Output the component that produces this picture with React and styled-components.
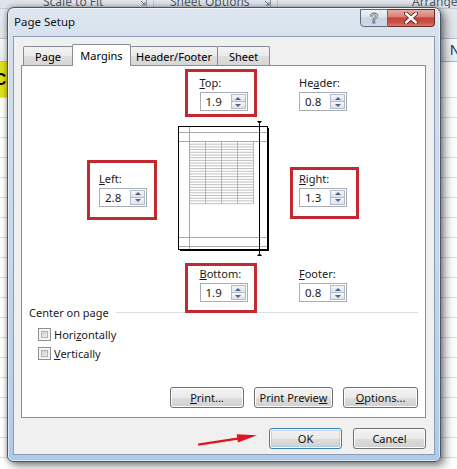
import React from 'react';
import styled, { createGlobalStyle, css } from 'styled-components';

const UI_FONT = `"Noto Sans", "Open Sans", "DejaVu Sans", sans-serif`;
const SHEET_FONT = `"Liberation Sans", Arial, sans-serif`;

const GlobalStyle = createGlobalStyle`
  html, body { margin: 0; padding: 0; background: #fff; }
  body { width: 457px; height: 469px; overflow: hidden; font-family: ${UI_FONT}; }
  * { box-sizing: border-box; }
`;

/* ---------- Excel background ---------- */
const Screen = styled.div`
  position: relative;
  width: 457px;
  height: 469px;
  overflow: hidden;
  background: #fff;
`;

const Ribbon = styled.div`
  height: 39px;
  background: linear-gradient(#e4e9ef, #dfe4ea);
  border-bottom: 1px solid #b7bec8;
`;

const GroupLabels = styled.div`
  display: flex;
  height: 9px;
  overflow: hidden;
  background: #dfe4ea;
  border-bottom: 1px solid #c6cdd6;
`;

const Group = styled.div`
  width: ${p => p.$w}px;
  flex: ${p => (p.$grow ? 1 : 'none')};
  display: flex;
  align-items: flex-start;
  padding-left: ${p => p.$pad}px;
  border-right: 1px solid #c2c9d2;
  font-size: 12px;
  line-height: 12px;
  color: #4f5b69;
`;

const GroupText = styled.span`
  margin-top: -4px;
`;

const Launcher = styled.svg`
  margin-left: auto;
  margin-right: 6px;
  margin-top: -1px;
`;

const ColHeaderRow = styled.div`
  height: 23px;
  display: flex;
  align-items: center;
  padding-left: 450px;
  background: linear-gradient(#f6f8fa, #e7ebf0);
  border-bottom: 1px solid #aab6c6;
  font-family: ${SHEET_FONT};
  font-size: 14px;
  color: #333;
`;

const SheetRow = styled.div`
  height: ${p => p.$h}px;
  display: flex;
  border-bottom: 1px solid #d9dce1;
`;

const Cell = styled.div`
  width: 70px;
  height: 100%;
  background: ${p => p.$fill || 'transparent'};
  font-family: ${SHEET_FONT};
  font-weight: bold;
  font-size: 17px;
  display: flex;
  align-items: center;
  text-indent: -6px;
`;

/* ---------- Dialog window ---------- */
const Dialog = styled.div`
  position: absolute;
  left: 7px;
  top: 7px;
  width: 434px;
  height: 455px;
  display: flex;
  flex-direction: column;
  border: 1px solid #4a5668;
  border-radius: 7px 7px 6px 6px;
  background: linear-gradient(180deg, #dde6f0 0%, #d2deeb 12%, #c4d7ed 55%, #aecaea 100%);
  box-shadow: inset 0 0 0 1px rgba(255, 255, 255, 0.55), 4px 4px 10px rgba(0, 0, 0, 0.45),
    0 0 5px rgba(0, 0, 0, 0.35);
  font-family: ${UI_FONT};
  font-size: 11px;
  color: #000;
`;

const TitleBar = styled.div`
  height: 28px;
  display: flex;
  align-items: flex-start;
`;

const Title = styled.div`
  padding-left: 6px;
  margin-top: 7px;
  line-height: 14px;
  font-size: 11.5px;
  color: #111;
`;

const Controls = styled.div`
  margin-left: auto;
  margin-right: 5px;
  margin-top: 1px;
  display: flex;
`;

const CaptionButton = styled.div`
  height: 18px;
  width: ${p => p.$w}px;
  display: flex;
  align-items: center;
  justify-content: center;
  border: 1px solid #5d6b7e;
  ${p =>
    p.$close
      ? css`
          border-color: #6a2a25;
          border-left: none;
          border-radius: 0 0 4px 0;
          background: linear-gradient(#e8aaa3 0%, #d98277 42%, #c4433a 50%, #cf5248 80%, #dc7d6f 100%);
        `
      : css`
          border-radius: 0 0 0 4px;
          background: linear-gradient(#edf2f7 0%, #dae3ec 45%, #c6d3e1 50%, #cfdbe8 100%);
        `}
`;

const HelpGlyph = styled.span`
  font-family: ${SHEET_FONT};
  font-weight: bold;
  font-size: 14px;
  line-height: 14px;
  color: #eef3f8;
  -webkit-text-stroke: 0.8px #5b6a80;
`;

const Client = styled.div`
  height: 419px;
  margin: 0 5px 6px;
  display: flex;
  flex-direction: column;
  padding-top: 7px;
  background: #f0f0f0;
  border: 1px solid #8b9bb2;
`;

const TabStrip = styled.div`
  display: flex;
  align-items: flex-end;
  height: 22px;
  padding-left: 9px;
  margin-bottom: -1px;
  position: relative;
  z-index: 1;
`;

const Tab = styled.div`
  width: ${p => p.$w}px;
  margin-left: ${p => (p.$first ? 0 : -1)}px;
  display: flex;
  align-items: center;
  justify-content: center;
  border: 1px solid #898c95;
  border-bottom: none;
  border-radius: 2px 2px 0 0;
  white-space: nowrap;
  ${p =>
    p.$active
      ? css`
          height: 22px;
          padding-bottom: 1px;
          background: #fff;
          position: relative;
          z-index: 2;
        `
      : css`
          height: 19px;
          margin-bottom: 1px;
          padding-top: 1px;
          background: linear-gradient(#f3f3f3 0%, #ebebeb 50%, #dedede 51%, #d6d6d6 100%);
        `}
`;

const Panel = styled.div`
  height: 353px;
  margin: 0 8px 0 7px;
  display: flex;
  flex-direction: column;
  background: #fff;
  border: 1px solid #898c95;
`;

const MarginGrid = styled.div`
  display: grid;
  grid-template-columns: 49px 91px 49px;
  grid-template-rows: 36px 125px 36px;
  column-gap: 30px;
  row-gap: 15px;
  margin: 9px 0 0 77px;
`;

const Field = styled.div`
  position: relative;
  width: 48px;
  height: 36px;
  display: flex;
  flex-direction: column;
  grid-column: ${p => p.$col};
  grid-row: ${p => p.$row};
  justify-self: ${p => (p.$col === 2 ? 'center' : 'start')};
  align-self: center;
  ${p =>
    p.$mark &&
    css`
      &::after {
        content: '';
        position: absolute;
        top: -${p.$mark[0]}px;
        right: -${p.$mark[1]}px;
        bottom: -${p.$mark[2]}px;
        left: -${p.$mark[3]}px;
        border: 3px solid #c2282f;
        pointer-events: none;
      }
    `}
`;

const FieldLabel = styled.div`
  line-height: 15px;
  height: 15px;
  margin-bottom: 2px;
  white-space: nowrap;
  color: #1a1a1a;
`;

const Key = styled.span`
  text-decoration: underline;
  text-underline-offset: 1px;
  text-decoration-thickness: 1px;
`;

const SpinBox = styled.div`
  width: 48px;
  height: 19px;
  display: flex;
  border: 1px solid #a9adb5;
  background: #fff;
`;

const SpinValue = styled.div`
  flex: 1;
  padding-left: 5px;
  line-height: 17px;
  font-size: 11.5px;
  color: #1a1a1a;
`;

const SpinButtons = styled.div`
  width: 15px;
  margin: 1px;
  display: flex;
  flex-direction: column;
`;

const SpinHalf = styled.div`
  flex: 1;
  display: flex;
  align-items: center;
  justify-content: center;
  border: 1px solid #b3bccb;
  ${p => p.$down && 'border-top: none;'}
  background: linear-gradient(#f5f7fa, #dde3eb);
`;

const Tri = styled.div`
  width: 0;
  height: 0;
  border-left: 3px solid transparent;
  border-right: 3px solid transparent;
  ${p => (p.$down ? 'border-top: 3px solid #4e6386;' : 'border-bottom: 3px solid #4e6386;')}
`;

const Preview = styled.svg`
  grid-column: 2;
  grid-row: 2;
  overflow: visible;
  display: block;
`;

const CenterGroup = styled.div`
  margin-top: 3px;
  display: flex;
  flex-direction: column;
`;

const GroupHeader = styled.div`
  display: flex;
  align-items: center;
  padding-left: 7px;
  line-height: 15px;
  color: #1a1a1a;
`;

const Rule = styled.div`
  flex: 1;
  height: 1px;
  margin: 0 7px 0 7px;
  background: #d5dfe5;
`;

const CheckRow = styled.div`
  height: 19px;
  display: flex;
  align-items: center;
  gap: 3px;
  padding-left: 16px;
  color: #1a1a1a;
  &:first-of-type {
    margin-top: 5px;
  }
`;

const CheckList = styled.div`
  display: flex;
  flex-direction: column;
`;

const CheckBox = styled.div`
  position: relative;
  width: 13px;
  height: 13px;
  border: 1px solid #8e8f8f;
  background: #f4f4f4;
  &::after {
    content: '';
    position: absolute;
    inset: 2px;
    border: 1px solid #aeb2b8;
    background: linear-gradient(135deg, #cbcfd5, #f1f2f4);
  }
`;

const ButtonRow = styled.div`
  display: flex;
  justify-content: flex-end;
  gap: ${p => p.$gap}px;
  margin: ${p => p.$margin};
`;

const Button = styled.div`
  width: ${p => p.$w}px;
  height: 21px;
  display: flex;
  align-items: center;
  justify-content: center;
  border: 1px solid #707070;
  border-radius: 3px;
  background: linear-gradient(#f3f3f3 0%, #ebebeb 50%, #dddddd 51%, #d0d0d0 100%);
  box-shadow: inset 0 0 0 1px #fcfcfc;
  color: #111;
  white-space: nowrap;
  ${p =>
    p.$default &&
    css`
      border-color: #3c7fb1;
      box-shadow: inset 0 0 0 1px #fcfcfc, inset 0 0 0 2px rgba(140, 200, 240, 0.55);
    `}
`;

const Annotation = styled.svg`
  position: absolute;
  left: 195px;
  top: 428px;
  overflow: visible;
`;

/* ---------- pieces ---------- */
function Spin({ value }) {
  return (
    <SpinBox>
      <SpinValue>{value}</SpinValue>
      <SpinButtons>
        <SpinHalf>
          <Tri />
        </SpinHalf>
        <SpinHalf $down>
          <Tri $down />
        </SpinHalf>
      </SpinButtons>
    </SpinBox>
  );
}

function MarginField({ k, rest, value, col, row, mark, pre = '' }) {
  return (
    <Field $col={col} $row={row} $mark={mark}>
      <FieldLabel>
        {pre}
        <Key>{k}</Key>
        {rest}
      </FieldLabel>
      <Spin value={value} />
    </Field>
  );
}

function PagePreview() {
  const rows = [];
  for (let i = 0; i <= 23; i++) {
    const y = 15.5 + i * 2.7;
    rows.push(<line key={'r' + i} x1="11.5" x2="75.5" y1={y} y2={y} stroke="#aaaaaa" strokeWidth="0.75" />);
  }
  const cols = [27.5, 43.5, 59.5, 75.5].map(x => (
    <line key={'c' + x} x1={x} x2={x} y1="15.5" y2="77.6" stroke="#aaaaaa" strokeWidth="0.8" />
  ));
  return (
    <Preview width="91" height="125" viewBox="0 0 91 125">
      <rect x="0.5" y="0.5" width="89" height="123" fill="#fff" stroke="#000" />
      <line x1="90.5" y1="2" x2="90.5" y2="125" stroke="#000" />
      <line x1="2" y1="124.5" x2="91" y2="124.5" stroke="#000" />
      {[6.5, 15.5, 111.5, 120.5].map(y => (
        <line key={y} x1="1" x2="89" y1={y} y2={y} stroke="#a9a9a9" />
      ))}
      <line x1="11.5" x2="11.5" y1="1" y2="123" stroke="#a9a9a9" />
      {rows}
      {cols}
      <line x1="81.5" x2="81.5" y1="-2" y2="127" stroke="#000" />
      <polygon points="79,-5 84,-5 81.5,-2" fill="#000" />
      <polygon points="79,130 84,130 81.5,127" fill="#000" />
    </Preview>
  );
}

const tabs = [
  { label: 'Page', w: 50 },
  { label: 'Margins', w: 59, active: true },
  { label: 'Header/Footer', w: 88 },
  { label: 'Sheet', w: 53 },
];

export default function App() {
  const sheetRows = [36, 20, 20, 20, 20, 20, 20, 20, 20, 20, 20, 20, 20, 20, 20, 20, 20, 20, 20, 20];
  return (
    <>
      <GlobalStyle />
      <Screen>
        <Ribbon>
          <GroupLabels>
            <Group $w={154} $pad={43}>
              <GroupText>Scale to Fit</GroupText>
              <Launcher width="8" height="8" viewBox="0 0 8 8">
                <path d="M0.5 0.5H7.5V7.5" fill="none" stroke="#8a96a6" />
                <path d="M2 2L6 6M6 3V6H3" fill="none" stroke="#6b7787" />
              </Launcher>
            </Group>
            <Group $w={124} $pad={16}>
              <GroupText>Sheet Options</GroupText>
              <Launcher width="8" height="8" viewBox="0 0 8 8">
                <path d="M0.5 0.5H7.5V7.5" fill="none" stroke="#8a96a6" />
                <path d="M2 2L6 6M6 3V6H3" fill="none" stroke="#6b7787" />
              </Launcher>
            </Group>
            <Group $grow $pad={134}>
              <GroupText>Arrange</GroupText>
            </Group>
          </GroupLabels>
        </Ribbon>
        <ColHeaderRow>N</ColHeaderRow>
        {sheetRows.map((h, i) => (
          <SheetRow key={i} $h={h}>
            <Cell $fill={i === 0 ? '#e0e01c' : undefined}>{i === 0 ? 'Co' : ''}</Cell>
          </SheetRow>
        ))}

        <Dialog>
          <TitleBar>
            <Title>Page Setup</Title>
            <Controls>
              <CaptionButton $w={28}>
                <HelpGlyph>?</HelpGlyph>
              </CaptionButton>
              <CaptionButton $w={47} $close>
                <svg width="14" height="12" viewBox="0 0 14 12">
                  <path d="M2 1.5L12 10.5M12 1.5L2 10.5" stroke="#5a1e1a" strokeWidth="4.2" strokeLinecap="round" />
                  <path d="M2 1.5L12 10.5M12 1.5L2 10.5" stroke="#fff" strokeWidth="2.4" strokeLinecap="round" />
                </svg>
              </CaptionButton>
            </Controls>
          </TitleBar>

          <Client>
            <TabStrip>
              {tabs.map((t, i) => (
                <Tab key={t.label} $w={t.w} $first={i === 0} $active={t.active}>
                  {t.label}
                </Tab>
              ))}
            </TabStrip>

            <Panel>
              <MarginGrid>
                <MarginField k="T" rest="op:" value="1.9" col={2} row={1} mark={[6, 9.5, 6, 14.5]} />
                <MarginField pre="He" k="a" rest="der:" value="0.8" col={3} row={1} />
                <MarginField k="L" rest="eft:" value="2.8" col={1} row={2} mark={[10.5, 10, 13.5, 12]} />
                <PagePreview />
                <MarginField k="R" rest="ight:" value="1.3" col={3} row={2} mark={[3.5, 12, 12.5, 9]} />
                <MarginField k="B" rest="ottom:" value="1.9" col={2} row={3} mark={[3, 9.5, 11, 14.5]} />
                <MarginField k="F" rest="ooter:" value="0.8" col={3} row={3} />
              </MarginGrid>

              <CenterGroup>
                <GroupHeader>
                  Center on page
                  <Rule />
                </GroupHeader>
                <CheckList>
                  <CheckRow>
                    <CheckBox />
                    <span>
                      Hori<Key>z</Key>ontally
                    </span>
                  </CheckRow>
                  <CheckRow>
                    <CheckBox />
                    <span>
                      <Key>V</Key>ertically
                    </span>
                  </CheckRow>
                </CheckList>
              </CenterGroup>

              <ButtonRow $gap={10} $margin="auto 7px 9px 0">
                <Button $w={74}>
                  <Key>P</Key>rint...
                </Button>
                <Button $w={79}>
                  Print Previe<Key>w</Key>
                </Button>
                <Button $w={75}>
                  <Key>O</Key>ptions...
                </Button>
              </ButtonRow>
            </Panel>

            <ButtonRow $gap={11} $margin="10px 8px 0 0">
              <Button $w={73} $default>
                OK
              </Button>
              <Button $w={73}>Cancel</Button>
            </ButtonRow>
          </Client>
        </Dialog>

        <Annotation width="66" height="20" viewBox="0 0 66 20">
          <polygon points="3,15.6 44,9.2 44.4,11.6 3.4,17.8" fill="#e0141c" />
          <polygon points="62,7.3 41.7,6.2 42.9,14.6" fill="#e0141c" />
        </Annotation>
      </Screen>
    </>
  );
}
